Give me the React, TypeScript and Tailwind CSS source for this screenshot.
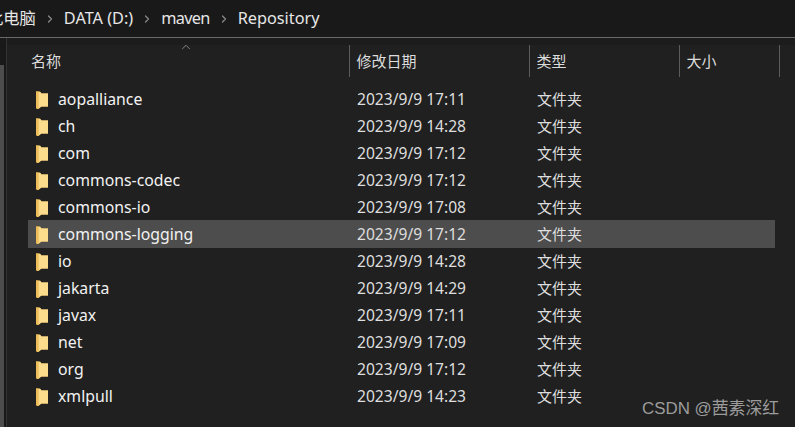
import React from 'react';
import { ChevronRight, ChevronUp } from 'lucide-react';

const rows = [
  { name: 'aopalliance', date: '2023/9/9 17:11' },
  { name: 'ch', date: '2023/9/9 14:28' },
  { name: 'com', date: '2023/9/9 17:12' },
  { name: 'commons-codec', date: '2023/9/9 17:12' },
  { name: 'commons-io', date: '2023/9/9 17:08' },
  { name: 'commons-logging', date: '2023/9/9 17:12', selected: true },
  { name: 'io', date: '2023/9/9 14:28' },
  { name: 'jakarta', date: '2023/9/9 14:29' },
  { name: 'javax', date: '2023/9/9 17:11' },
  { name: 'net', date: '2023/9/9 17:09' },
  { name: 'org', date: '2023/9/9 17:12' },
  { name: 'xmlpull', date: '2023/9/9 14:23' },
];

const FolderIcon = () => (
  <svg width="12" height="18" viewBox="0 0 12 18" className="shrink-0">
    <path d="M0 0.5h4l1.5 2H12v13H5.5L2.5 18H1l-1-1z" fill="#f3c766" />
    <path d="M2.5 1h1.5l1.5 1.5H12v13H5.5L2.5 17z" fill="#fbdc8d" />
    <path d="M0 0.5h2.5v17H1l-1-1z" fill="#ecbd58" />
  </svg>
);

const Crumb = ({ label, className }: { label: string; className?: string }) => (
  <>
    <ChevronRight className="w-[12px] h-[12px] mx-[8px] text-[#8a8a8a]" strokeWidth={2.5} />
    <span className={className}>{label}</span>
  </>
);

const HeaderCell = ({ label, className }: { label: string; className: string }) => (
  <div className={`h-full flex items-center border-r border-[#5c5c5c] pl-[6.5px] ${className}`}>{label}</div>
);

export default function App() {
  return (
    <div
      className="relative w-[795px] h-[427px] overflow-hidden flex flex-col bg-[#202020] text-[#e6e6e6] text-[15px]"
      style={{ fontFamily: '"Noto Sans", "Noto Sans CJK SC", sans-serif' }}
    >
      {/* address bar */}
      <div className="h-[38px] shrink-0 flex items-center bg-[#191919] border-b border-[#6a6a6a] pl-[8px] -ml-[21px] text-[16.3px] whitespace-nowrap">
        <span>此电脑</span>
        <Crumb label="DATA (D:)" />
        <Crumb label="maven" className="tracking-[-0.7px]" />
        <Crumb label="Repository" />
      </div>

      <div className="flex-1 flex min-h-0">
        {/* left pane edge with its scrollbar */}
        <div className="w-[7px] shrink-0 flex flex-col bg-[#191919] border-r border-[#333333]">
          <div className="h-[27px] shrink-0" />
          <div className="w-[4px] flex-1 bg-[#4d4d4d]" />
        </div>

        <div className="flex-1 flex flex-col min-w-0">
          <div className="h-[7px] shrink-0 bg-[#1c1c1c]" />

          {/* column headers */}
          <div className="relative h-[32px] shrink-0 flex text-[15px] text-[#dcdcdc]">
            <HeaderCell label="名称" className="w-[343px] pl-[24px]" />
            <HeaderCell label="修改日期" className="w-[180px]" />
            <HeaderCell label="类型" className="w-[150px]" />
            <HeaderCell label="大小" className="w-[100px]" />
            <ChevronUp className="absolute left-[172px] -top-[5px] w-[14px] h-[14px] text-[#a8a8a8]" strokeWidth={1.25} />
          </div>

          {/* file list */}
          <div className="mt-[8px] ml-[21px] w-[747px] flex flex-col">
            {rows.map((row) => (
              <div
                key={row.name}
                className={`shrink-0 flex items-center ${
                  row.selected ? 'h-[28px] -mb-[1px] pt-[1px] bg-[#4d4d4d]' : 'h-[27px] pt-[2px]'
                }`}
              >
                <div className="w-[329px] flex items-center gap-[10px] pl-[8px] text-[15.8px] text-[#f2f2f2]">
                  <FolderIcon />
                  <span>{row.name}</span>
                </div>
                <div className="w-[180px] text-[15.6px] text-[#dedede]">{row.date}</div>
                <div className="text-[15px] text-[#dedede]">文件夹</div>
              </div>
            ))}
          </div>
        </div>
      </div>

      <div
        className="absolute left-[642px] top-[396px] text-[16.9px] text-[#9c9c9c]"
        style={{ fontFamily: '"Liberation Sans", "Noto Sans CJK SC", sans-serif' }}
      >
        CSDN @茜素深红
      </div>
    </div>
  );
}
